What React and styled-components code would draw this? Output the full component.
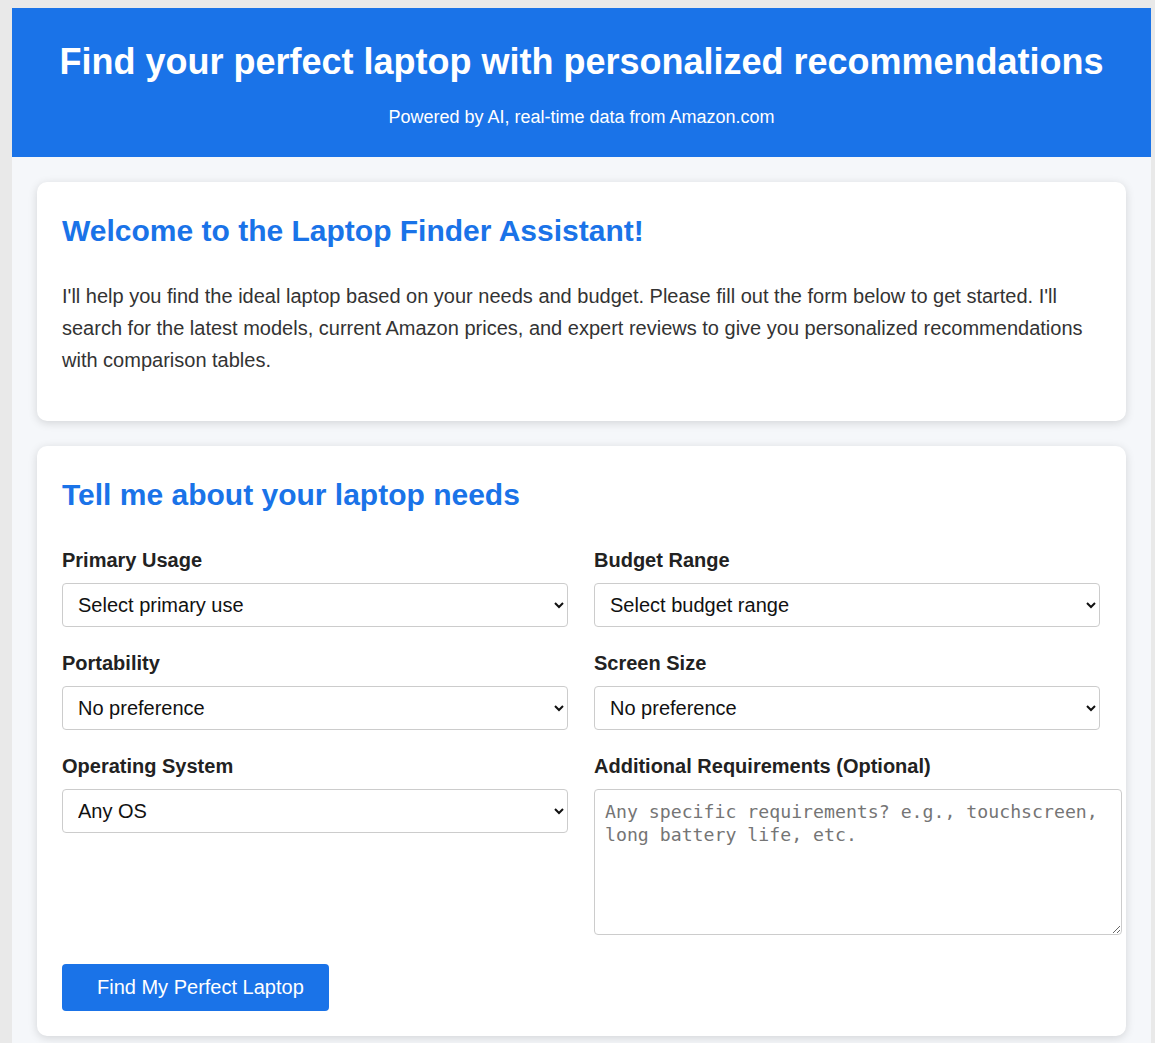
import styled, { createGlobalStyle } from 'styled-components';

const GlobalStyle = createGlobalStyle`
  html {
    background: #e9e9e9;
  }
  body {
    margin: 8px 4px 8px 12px;
    font-family: "Liberation Sans", Arial, sans-serif;
    color: #333;
  }
`;

const Page = styled.div`
  background: #f5f7fa;
  max-width: 1139px;
`;

const Header = styled.header`
  background: #1a73e8;
  color: #fff;
  text-align: center;
  padding: 34px 20px 29px;
`;

const HeaderTitle = styled.h1`
  margin: 0 0 24px;
  font-size: 36px;
  line-height: 40px;
  font-weight: 700;
`;

const HeaderSub = styled.p`
  margin: 0;
  font-size: 18px;
  line-height: 22px;
`;

const Main = styled.main`
  padding: 25px;
  display: flex;
  flex-direction: column;
  gap: 25px;
`;

const Card = styled.section`
  background: #fff;
  border-radius: 10px;
  box-shadow: 0 2px 10px rgba(0, 0, 0, 0.14);
  padding: 25px;
`;

const CardTitle = styled.h2`
  margin: 7px 0 ${(p) => p.$gap || 32}px;
  font-size: 30px;
  line-height: 34px;
  color: #1a73e8;
  font-weight: 700;
`;

const Intro = styled.p`
  margin: 0 0 20px;
  font-size: 20px;
  line-height: 32px;
  color: #333;
`;

const FormGrid = styled.div`
  display: grid;
  grid-template-columns: 506px 506px;
  column-gap: 26px;
`;

const Field = styled.div`
  margin-bottom: 25px;
`;

const Label = styled.label`
  display: block;
  font-size: 20px;
  line-height: 22px;
  font-weight: 700;
  color: #222;
  margin-bottom: 12px;
`;

const Select = styled.select`
  width: 100%;
  height: 44px;
  padding: 0 11px;
  font-family: "Liberation Sans", Arial, sans-serif;
  font-size: 20px;
  color: #111;
  background: #fff;
  border: 1px solid #ccc;
  border-radius: 4px;
`;

const TextArea = styled.textarea`
  width: 100%;
  height: 124px;
  padding: 10px;
  font-family: "DejaVu Sans Mono", monospace;
  font-size: 18.2px;
  line-height: 23px;
  color: #333;
  border: 1px solid #ccc;
  border-radius: 4px;

  &::placeholder {
    color: #757575;
  }
`;

const SubmitButton = styled.button`
  background: #1a73e8;
  color: #fff;
  border: none;
  border-radius: 4px;
  padding: 12px 25px 12px 35px;
  font-family: "Liberation Sans", Arial, sans-serif;
  font-size: 20px;
  line-height: 23px;
  cursor: pointer;
`;

const fields = [
  { id: 'usage', label: 'Primary Usage', options: ['Select primary use', 'Everyday use', 'Gaming', 'Business', 'Creative work', 'Programming'] },
  { id: 'budget', label: 'Budget Range', options: ['Select budget range', 'Under $500', '$500 - $1000', '$1000 - $1500', 'Over $1500'] },
  { id: 'portability', label: 'Portability', options: ['No preference', 'Very portable', 'Balanced', 'Desktop replacement'] },
  { id: 'screen', label: 'Screen Size', options: ['No preference', '13 inch', '14 inch', '15.6 inch', '17 inch'] },
  { id: 'os', label: 'Operating System', options: ['Any OS', 'Windows', 'macOS', 'ChromeOS', 'Linux'] },
];

function App() {
  return (
    <>
      <GlobalStyle />
      <Page>
        <Header>
          <HeaderTitle>Find your perfect laptop with personalized recommendations</HeaderTitle>
          <HeaderSub>Powered by AI, real-time data from Amazon.com</HeaderSub>
        </Header>
        <Main>
          <Card>
            <CardTitle>Welcome to the Laptop Finder Assistant!</CardTitle>
            <Intro>
              I'll help you find the ideal laptop based on your needs and budget. Please fill out the form below
              to get started. I'll search for the latest models, current Amazon prices, and expert reviews to give
              you personalized recommendations with comparison tables.
            </Intro>
          </Card>
          <Card>
            <CardTitle $gap={37}>Tell me about your laptop needs</CardTitle>
            <form onSubmit={(e) => e.preventDefault()}>
              <FormGrid>
                {fields.map((f) => (
                  <Field key={f.id}>
                    <Label htmlFor={f.id}>{f.label}</Label>
                    <Select id={f.id} defaultValue={f.options[0]}>
                      {f.options.map((o) => (
                        <option key={o}>{o}</option>
                      ))}
                    </Select>
                  </Field>
                ))}
                <Field>
                  <Label htmlFor="extra">Additional Requirements (Optional)</Label>
                  <TextArea
                    id="extra"
                    placeholder="Any specific requirements? e.g., touchscreen, long battery life, etc."
                  />
                </Field>
              </FormGrid>
              <SubmitButton type="submit">Find My Perfect Laptop</SubmitButton>
            </form>
          </Card>
        </Main>
      </Page>
    </>
  );
}

export default App;
